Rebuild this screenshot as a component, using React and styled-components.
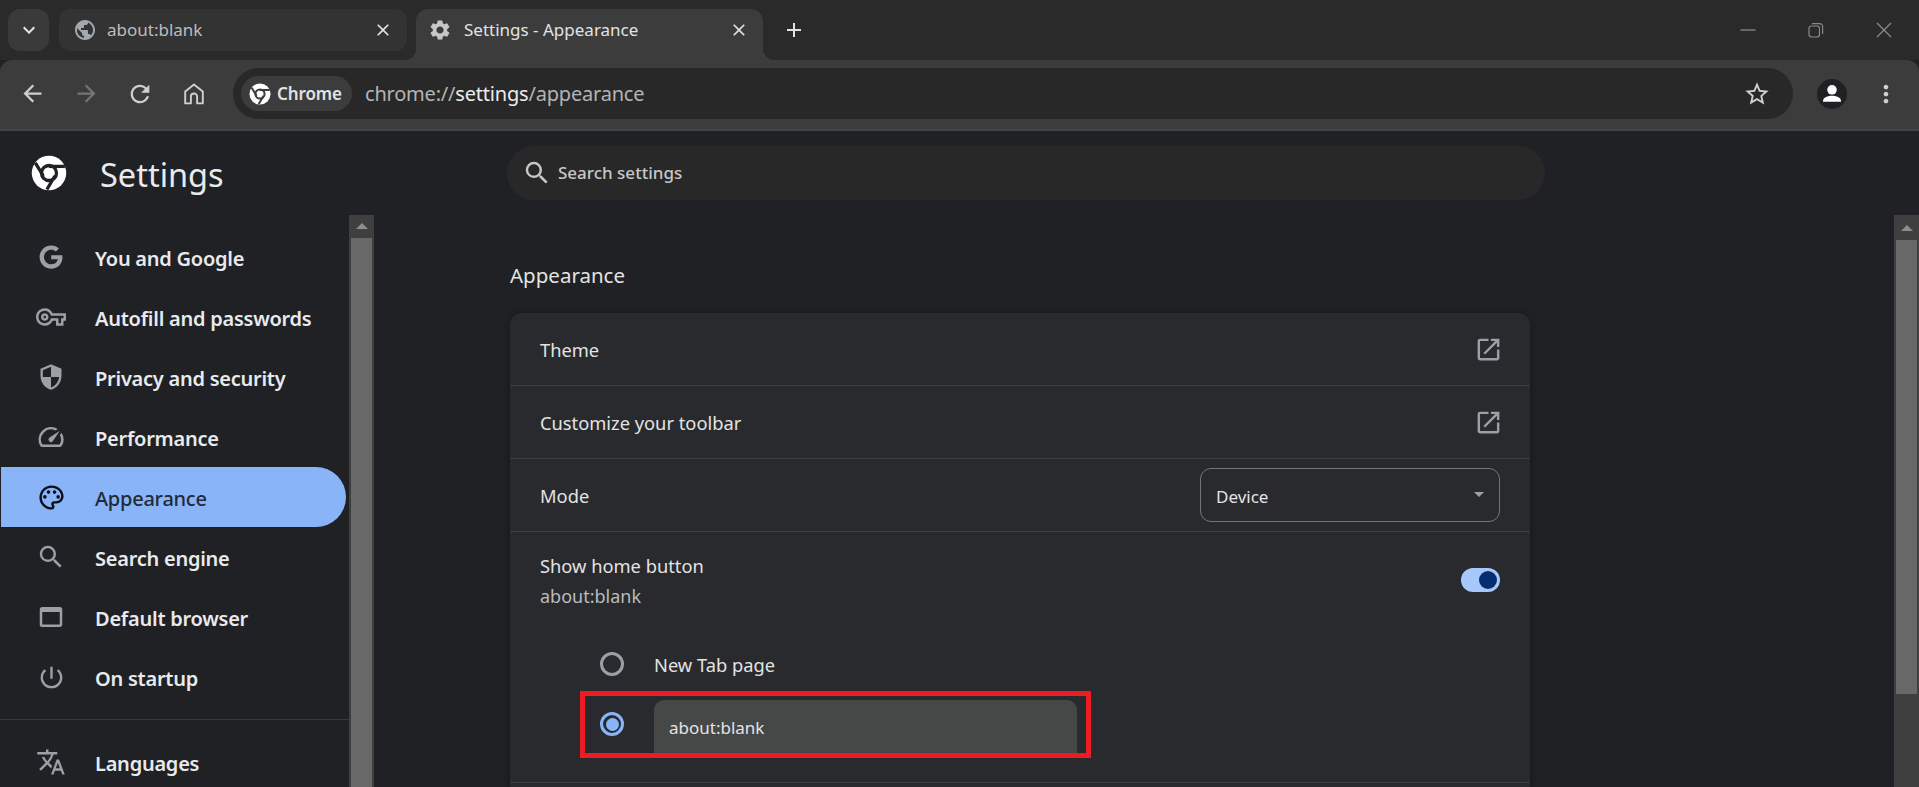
import React from 'react'
import styled, { createGlobalStyle } from 'styled-components'
import {
  MdPublic, MdClose, MdSettings, MdAdd, MdArrowBack, MdArrowForward, MdRefresh,
  MdStarBorder, MdMoreVert, MdSecurity, MdOutlineVpnKey, MdOutlineSpeed,
  MdOutlinePalette, MdSearch, MdOutlineWebAsset, MdPowerSettingsNew, MdTranslate,
  MdOutlineOpenInNew, MdKeyboardArrowDown,
} from 'react-icons/md'
import { FaGoogle } from 'react-icons/fa'

const GlobalStyle = createGlobalStyle`
  html, body { margin: 0; padding: 0; height: 100%; background: #202124; }
  #root { height: 100%; }
  * { box-sizing: border-box; }
`

const ChromeLogo = ({ size, ink }) => (
  <svg width={size} height={size} viewBox="0 0 24 24">
    <circle cx="12" cy="12" r="11.5" fill="#fff" />
    <g fill="none" stroke={ink} strokeWidth="2.2">
      <path d="M10.6 23 15.9 14" />
      <path d="M22.6 7.6H12" />
      <path d="M2.9 5.2 8.2 14" />
      <circle cx="12" cy="12" r="5" />
    </g>
  </svg>
)

const HomeIcon = () => (
  <svg width="20" height="22" viewBox="0 0 20 22" fill="none" stroke="currentColor" strokeWidth="1.9">
    <path d="M10 1.400 18.800 8.400V20.400H13.100V13.600A3.100 3.100 0 0 0 6.900 13.600V20.400H1.200V8.400Z" strokeLinejoin="round" />
  </svg>
)

const RestoreIcon = () => (
  <svg width="16" height="16" viewBox="0 0 16 16" fill="none" stroke="#8a8a8a" strokeWidth="1.2">
    <rect x="1" y="4" width="10.5" height="11" rx="2.4" />
    <path d="M4 1.6h7.6A3 3 0 0 1 14.6 4.6V12" />
  </svg>
)

const MinimizeIcon = () => (
  <svg width="16" height="16" viewBox="0 0 16 16" stroke="#8a8a8a" strokeWidth="1.3">
    <path d="M0.5 8h15" />
  </svg>
)

const CloseWinIcon = () => (
  <svg width="16" height="16" viewBox="0 0 16 16" stroke="#8a8a8a" strokeWidth="1.3">
    <path d="M1 1l14 14M15 1 1 15" />
  </svg>
)

const AvatarIcon = () => (
  <svg width="30" height="30" viewBox="0 0 30 30">
    <circle cx="15" cy="15" r="15" fill="#202124" />
    <circle cx="15" cy="10.8" r="4.8" fill="#fff" />
    <path d="M6 22c0-3.6 5-5.2 9-5.2s9 1.600 9 5.200v.8H6z" fill="#fff" />
  </svg>
)

const Page = styled.div`
  height: 787px;
  overflow: hidden;
  display: flex;
  flex-direction: column;
  font-family: "Noto Sans", "Open Sans", sans-serif;
  background: #202124;
`

const TabStrip = styled.div`
  height: 60px;
  flex: none;
  display: flex;
  align-items: flex-start;
  padding: 9px 0 0 8px;
  background: #2a2a2a;
`

const TabsButton = styled.div`
  width: 41px;
  height: 42px;
  margin-right: 10px;
  border-radius: 12px;
  background: #3a3a3a;
  color: #e6e6e6;
  display: flex;
  align-items: center;
  justify-content: center;
`

const Tab = styled.div`
  position: relative;
  height: ${p => (p.$active ? '51px' : '42px')};
  width: ${p => (p.$active ? '347px' : '348px')};
  margin-right: ${p => (p.$active ? '19px' : '9px')};
  padding: ${p => (p.$active ? '0 14px 9px 12px' : '0 14px')};
  border-radius: ${p => (p.$active ? '12px 12px 0 0' : '12px')};
  background: ${p => (p.$active ? '#3c3c3c' : '#333333')};
  display: flex;
  align-items: center;
  gap: ${p => (p.$active ? '12px' : '10px')};
  color: ${p => (p.$active ? '#e3e3e3' : '#bdbdbd')};
  ${p => p.$active && `
    &::before, &::after {
      content: '';
      position: absolute;
      bottom: 0;
      width: 12px;
      height: 12px;
    }
    &::before { left: -12px; background: radial-gradient(circle at 0 0, transparent 12px, #3c3c3c 12.5px); }
    &::after { right: -12px; background: radial-gradient(circle at 100% 0, transparent 12px, #3c3c3c 12.5px); }
  `}
`

const TabTitle = styled.span`
  flex: 1;
  font-size: 17px;
  line-height: 22px;
  white-space: nowrap;
`

const TabClose = styled.span`
  display: flex;
  color: #e3e3e3;
`

const TabIcon = styled.span`
  display: flex;
  color: ${p => p.$color};
`

const NewTab = styled.div`
  display: flex;
  height: 42px;
  align-items: center;
  color: #e3e3e3;
`

const WindowControls = styled.div`
  margin-left: auto;
  display: flex;
  align-items: center;
  height: 42px;
  gap: 52px;
  padding-right: 27px;
`

const Toolbar = styled.div`
  height: 71px;
  flex: none;
  display: flex;
  align-items: center;
  background: #3c3c3c;
  border-radius: 12px 12px 0 0;
  border-bottom: 2px solid #444444;
  padding: 0 0 2px 20px;
  position: relative;
`

const NavButton = styled.span`
  width: 24px;
  height: 24px;
  margin-right: ${p => p.$gap ?? 30}px;
  display: flex;
  align-items: center;
  justify-content: center;
  color: ${p => (p.$off ? '#747474' : '#cfcfcf')};
  svg { flex: none; }
`

const Omnibox = styled.div`
  flex: 1;
  height: 51px;
  margin-left: 27px;
  border-radius: 26px;
  background: #282828;
  display: flex;
  align-items: center;
  padding: 0 22px 0 8px;
`

const SecurityChip = styled.div`
  width: 111px;
  height: 35px;
  border-radius: 18px;
  background: #3c3c3c;
  display: flex;
  align-items: center;
  gap: 6px;
  padding-left: 8px;
  color: #e3e3e3;
  font-size: 17px;
  font-weight: 600;
  letter-spacing: -0.1px;
`

const Url = styled.div`
  margin-left: 13px;
  font-size: 20px;
  color: #b4b4b4;
  letter-spacing: -0.2px;
  b { font-weight: 400; color: #ececec; }
`

const StarButton = styled.span`
  margin-left: auto;
  display: flex;
  color: #d0d0d0;
`

const ToolbarEnd = styled.div`
  display: flex;
  align-items: center;
  width: 126px;
  padding-left: 24px;
  gap: 25px;
  color: #d0d0d0;
`

const Header = styled.div`
  height: 84px;
  flex: none;
  display: flex;
  padding-top: 15px;
`

const Brand = styled.div`
  width: 507px;
  height: 54px;
  display: flex;
  align-items: center;
  padding-left: 31px;
  gap: 33px;
  color: #e8eaed;
  font-size: 32.500px;
`

const BrandName = styled.span`
  padding-top: 2px;
`

const SearchBox = styled.div`
  width: 1038px;
  height: 54px;
  border-radius: 27px;
  background: #282828;
  display: flex;
  align-items: center;
  padding: 0 0 0 15px;
  gap: 6px;
  color: #c7c7c7;
  font-size: 17px;
  font-weight: 500;
`

const SearchLabel = styled.span`
  margin-top: -2px;
`

const Body = styled.div`
  flex: 1;
  min-height: 0;
  display: flex;
`

const Nav = styled.nav`
  width: 349px;
  flex: none;
  padding-top: 12px;
`

const NavRow = styled.div`
  height: 60px;
  width: 345px;
  margin-left: 1px;
  border-radius: 0 30px 30px 0;
  display: flex;
  align-items: center;
  gap: 29px;
  padding: 2px 0 0 35px;
  font-size: 20px;
  font-weight: ${p => (p.$active ? 500 : 600)};
  background: ${p => (p.$active ? '#89b4f8' : 'transparent')};
  color: ${p => (p.$active ? '#1f2a3a' : '#e8eaed')};
  letter-spacing: -0.25px;
`

const NavIcon = styled.span`
  width: 30px;
  margin-top: -2px;
  display: flex;
  justify-content: center;
  color: ${p => (p.$active ? '#0b0f17' : '#9aa0a6')};
`

const NavDivider = styled.div`
  height: 1px;
  margin: 12px 0 12px;
  background: #37383b;
`

const ScrollTrack = styled.div`
  width: 25px;
  flex: none;
  background: #3f3f3f;
  padding: 0 2px;
  display: flex;
  flex-direction: column;
`

const ScrollArrow = styled.div`
  height: 25px;
  display: flex;
  align-items: center;
  justify-content: center;
  &::before {
    content: '';
    border-left: 6px solid transparent;
    border-right: 6px solid transparent;
    border-bottom: 6px solid #8d8d8d;
  }
`

const ScrollThumb = styled.div`
  height: ${p => p.$height}px;
  background: #686868;
`

const Content = styled.main`
  flex: 1;
  padding: 46px 0 0 136px;
  overflow: hidden;
`

const SectionTitle = styled.h2`
  margin: 0 0 24px;
  font-size: 20.5px;
  line-height: 28px;
  font-weight: 400;
  color: #e3e3e3;
`

const Card = styled.section`
  width: 1020px;
  background: #292a2d;
  border-radius: 12px;
  box-shadow: 0 1px 8px rgba(0, 0, 0, 0.35);
  padding-bottom: 40px;
`

const Row = styled.div`
  height: 73px;
  padding: 0 ${p => (p.$tight ? 30 : 27)}px 0 30px;
  display: flex;
  align-items: center;
  justify-content: space-between;
  border-bottom: 1px solid #3d3e41;
  font-size: 18.3px;
  color: #e3e3e3;
`

const OpenIcon = styled.span`
  display: flex;
  color: #9aa0a6;
`

const Dropdown = styled.div`
  width: 300px;
  height: 54px;
  border: 1px solid #747775;
  border-radius: 11px;
  padding: 2px 15px 0;
  display: flex;
  align-items: center;
  justify-content: space-between;
  font-size: 17px;
  &::after {
    content: '';
    margin: 0 0 4px;
    border-left: 5.5px solid transparent;
    border-right: 5.5px solid transparent;
    border-top: 5.5px solid #9aa0a6;
  }
`

const HomeBlock = styled.div`
  padding-bottom: 24px;
  border-bottom: 1px solid #3d3e41;
`

const HomeHead = styled.div`
  height: 105px;
  padding: 19px 30px 26px;
  display: flex;
  align-items: center;
  justify-content: space-between;
`

const HomeTitle = styled.div`
  font-size: 18.3px;
  line-height: 30px;
  color: #e3e3e3;
`

const HomeSub = styled.div`
  font-size: 18px;
  line-height: 30px;
  color: #b9bbbe;
`

const Toggle = styled.div`
  width: 39px;
  height: 24px;
  margin-top: -2px;
  border-radius: 12px;
  background: #a8c7fa;
  display: flex;
  align-items: center;
  justify-content: flex-end;
  padding-right: 3px;
  &::after {
    content: '';
    width: 18px;
    height: 18px;
    border-radius: 50%;
    background: #062e6f;
  }
`

const RadioRow = styled.div`
  height: 54px;
  padding-left: 90px;
  display: flex;
  align-items: center;
  gap: 30px;
  font-size: 18.3px;
  color: #e3e3e3;
`

const Radio = styled.span`
  width: 24px;
  height: 24px;
  flex: none;
  border-radius: 50%;
  border: 3px solid ${p => (p.$on ? '#8ab4f8' : '#9aa0a6')};
  display: flex;
  align-items: center;
  justify-content: center;
  ${p => p.$on && `
    &::after {
      content: '';
      width: 13px;
      height: 13px;
      border-radius: 50%;
      background: #8ab4f8;
    }
  `}
`

const Highlight = styled.div`
  width: 511px;
  height: 67px;
  margin-left: 70px;
  border: 5px solid #ed1c24;
  padding: 4px 0 0 15px;
  display: flex;
  gap: 30px;
  overflow: hidden;
`

const RadioCell = styled.div`
  height: 48px;
  display: flex;
  align-items: center;
`

const UrlInput = styled.div`
  width: 423px;
  height: 70px;
  flex: none;
  padding: 10px 15px;
  border-radius: 10px 10px 0 0;
  background: #464847;
  font-size: 17px;
  line-height: 36px;
  color: #e3e3e3;
`

const navItems = [
  { label: 'You and Google', icon: <FaGoogle size={24} /> },
  { label: 'Autofill and passwords', icon: <MdOutlineVpnKey size={30} /> },
  { label: 'Privacy and security', icon: <MdSecurity size={28} /> },
  { label: 'Performance', icon: <MdOutlineSpeed size={30} /> },
  { label: 'Appearance', icon: <MdOutlinePalette size={29} />, active: true },
  { label: 'Search engine', icon: <MdSearch size={30} /> },
  { label: 'Default browser', icon: <MdOutlineWebAsset size={30} /> },
  { label: 'On startup', icon: <MdPowerSettingsNew size={29} /> },
]

function NavItem({ item }) {
  return (
    <NavRow $active={item.active}>
      <NavIcon $active={item.active}>{item.icon}</NavIcon>
      {item.label}
    </NavRow>
  )
}

function Scrollbar({ thumb }) {
  return (
    <ScrollTrack>
      <ScrollArrow />
      <ScrollThumb $height={thumb} />
    </ScrollTrack>
  )
}

export default function App() {
  return (
    <Page>
      <GlobalStyle />
      <TabStrip>
        <TabsButton><MdKeyboardArrowDown size={24} /></TabsButton>
        <Tab>
          <TabIcon $color="#a3a8ae"><MdPublic size={24} /></TabIcon>
          <TabTitle>about:blank</TabTitle>
          <TabClose><MdClose size={20} /></TabClose>
        </Tab>
        <Tab $active>
          <TabIcon $color="#c8c8c8"><MdSettings size={24} /></TabIcon>
          <TabTitle>Settings - Appearance</TabTitle>
          <TabClose><MdClose size={20} /></TabClose>
        </Tab>
        <NewTab><MdAdd size={24} /></NewTab>
        <WindowControls>
          <MinimizeIcon />
          <RestoreIcon />
          <CloseWinIcon />
        </WindowControls>
      </TabStrip>

      <Toolbar>
        <NavButton><MdArrowBack size={27} /></NavButton>
        <NavButton $off><MdArrowForward size={27} /></NavButton>
        <NavButton><MdRefresh size={28} /></NavButton>
        <NavButton $gap={0}><HomeIcon /></NavButton>
        <Omnibox>
          <SecurityChip>
            <ChromeLogo size={22} ink="#3c3c3c" />
            Chrome
          </SecurityChip>
          <Url>chrome://<b>settings</b>/appearance</Url>
          <StarButton><MdStarBorder size={28} /></StarButton>
        </Omnibox>
        <ToolbarEnd>
          <AvatarIcon />
          <MdMoreVert size={28} />
        </ToolbarEnd>
      </Toolbar>

      <Header>
        <Brand>
          <ChromeLogo size={36} ink="#202124" />
          <BrandName>Settings</BrandName>
        </Brand>
        <SearchBox>
          <MdSearch size={30} />
          <SearchLabel>Search settings</SearchLabel>
        </SearchBox>
      </Header>

      <Body>
        <Nav>
          {navItems.map(item => <NavItem key={item.label} item={item} />)}
          <NavDivider />
          <NavItem item={{ label: 'Languages', icon: <MdTranslate size={30} /> }} />
        </Nav>
        <Scrollbar thumb={600} />
        <Content>
          <SectionTitle>Appearance</SectionTitle>
          <Card>
            <Row>Theme<OpenIcon><MdOutlineOpenInNew size={29} /></OpenIcon></Row>
            <Row>Customize your toolbar<OpenIcon><MdOutlineOpenInNew size={29} /></OpenIcon></Row>
            <Row $tight>Mode<Dropdown>Device</Dropdown></Row>
            <HomeBlock>
              <HomeHead>
                <div>
                  <HomeTitle>Show home button</HomeTitle>
                  <HomeSub>about:blank</HomeSub>
                </div>
                <Toggle />
              </HomeHead>
              <RadioRow><Radio />New Tab page</RadioRow>
              <Highlight>
                <RadioCell><Radio $on /></RadioCell>
                <UrlInput>about:blank</UrlInput>
              </Highlight>
            </HomeBlock>
          </Card>
        </Content>
        <Scrollbar thumb={454} />
      </Body>
    </Page>
  )
}
